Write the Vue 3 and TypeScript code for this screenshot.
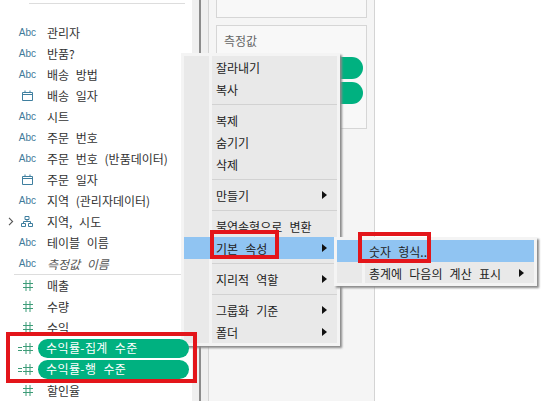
<script setup lang="ts">
type IconKind = "abc" | "date" | "geo" | "num" | "calc";

interface Field {
  icon: IconKind;
  label: string;
  italic?: boolean;
  pill?: boolean;
}

interface MenuEntry {
  label?: string;
  arrow?: boolean;
  active?: boolean;
  sep?: boolean;
}

const dimensions: Field[] = [
  { icon: "abc", label: "관리자" },
  { icon: "abc", label: "반품?" },
  { icon: "abc", label: "배송 방법" },
  { icon: "date", label: "배송 일자" },
  { icon: "abc", label: "시트" },
  { icon: "abc", label: "주문 번호" },
  { icon: "abc", label: "주문 번호 (반품데이터)" },
  { icon: "date", label: "주문 일자" },
  { icon: "abc", label: "지역 (관리자데이터)" },
  { icon: "geo", label: "지역, 시도" },
  { icon: "abc", label: "테이블 이름" },
  { icon: "abc", label: "측정값 이름", italic: true },
];

const measures: Field[] = [
  { icon: "num", label: "매출" },
  { icon: "num", label: "수량" },
  { icon: "num", label: "수익" },
  { icon: "calc", label: "수익률-집계 수준", pill: true },
  { icon: "calc", label: "수익률-행 수준", pill: true },
  { icon: "num", label: "할인율" },
];

const menu: MenuEntry[] = [
  { label: "잘라내기" },
  { label: "복사" },
  { sep: true },
  { label: "복제" },
  { label: "숨기기" },
  { label: "삭제" },
  { sep: true },
  { label: "만들기", arrow: true },
  { sep: true },
  { label: "불연속형으로 변환" },
  { label: "기본 속성", arrow: true, active: true },
  { sep: true },
  { label: "지리적 역할", arrow: true },
  { sep: true },
  { label: "그룹화 기준", arrow: true },
  { label: "폴더", arrow: true },
];

const submenu: MenuEntry[] = [
  { label: "숫자 형식...", active: true },
  { label: "총계에 다음의 계산 표시", arrow: true },
];
</script>

<template>
  <div class="page">
    <aside class="sidebar">
      <div class="top-rule"></div>
      <ul class="fields">
        <li v-for="f in dimensions" :key="f.label" class="field">
          <svg v-if="f.icon === 'geo'" class="chevron" width="6" height="9" viewBox="0 0 6 9">
            <path d="M1 .8 4.6 4.5 1 8.2" fill="none" stroke="#555" stroke-width="1.1" />
          </svg>
          <span class="icon">
            <span v-if="f.icon === 'abc'" class="abc">Abc</span>
            <svg v-else-if="f.icon === 'date'" width="11" height="11" viewBox="0 0 11 11">
              <path d="M.5 2.5h10v8H.5zM.5 4.5h10M3 .5v2M8 .5v2" fill="none" stroke="#3f7f9f" />
            </svg>
            <svg v-else width="12" height="11" viewBox="0 0 12 11">
              <path d="M4 .5h4v3H4zM.5 7.5h4v3h-4zM7.5 7.5h4v3h-4zM6 3.5v2M2.5 7.5v-2h7v2" fill="none" stroke="#3f7f9f" />
            </svg>
          </span>
          <span class="name" :class="{ italic: f.italic }">{{ f.label }}</span>
        </li>
      </ul>
      <div class="divider"></div>
      <ul class="fields">
        <li v-for="f in measures" :key="f.label" class="field" :class="{ 'pill-row': f.pill }">
          <span class="icon">
            <span v-if="f.icon === 'calc'" class="eq"></span>
            <svg width="10" height="11" viewBox="0 0 10 11">
              <path d="M3 0v11M7 0v11M0 3.5h10M0 7.5h10" fill="none" stroke="#3d9c78" />
            </svg>
          </span>
          <span class="name" :class="{ pill: f.pill }">{{ f.label }}</span>
        </li>
      </ul>
    </aside>

    <div class="splitter"></div>

    <section class="shelves">
      <div class="card card-top"></div>
      <div class="card card-values">
        <div class="card-title">측정값</div>
        <div class="shelf-pill"></div>
        <div class="shelf-pill"></div>
      </div>
    </section>

    <div class="canvas"></div>

    <div class="menu main-menu">
      <template v-for="(m, i) in menu" :key="i">
        <div v-if="m.sep" class="sep"></div>
        <div v-else class="item" :class="{ active: m.active }">
          <span>{{ m.label }}</span>
          <i v-if="m.arrow" class="arrow"></i>
        </div>
      </template>
    </div>

    <div class="menu sub-menu">
      <div v-for="m in submenu" :key="m.label" class="item" :class="{ active: m.active }">
        <span>{{ m.label }}</span>
        <i v-if="m.arrow" class="arrow"></i>
      </div>
    </div>

    <div class="mark mark-fields"></div>
    <div class="mark mark-basic"></div>
    <div class="mark mark-number"></div>
  </div>
</template>

<style scoped>
.page,
.page * {
  box-sizing: border-box;
}

.page {
  position: relative;
  display: flex;
  width: 544px;
  height: 401px;
  overflow: hidden;
  color: #333;
  font-family: "Noto Sans CJK KR", "Liberation Sans", sans-serif;
  font-size: 12px;
  background: #fff;
}

.sidebar {
  flex: 0 0 192px;
  padding-top: 3px;
  background: #fff;
}

.top-rule {
  height: 1px;
  margin: 0 7px 18px 29px;
  background: #ddd;
}

.fields {
  margin: 0;
  padding: 0;
  list-style: none;
}

.field {
  position: relative;
  display: flex;
  align-items: center;
  height: 21px;
  white-space: nowrap;
}

.chevron {
  position: absolute;
  top: 6px;
  left: 8px;
}

.icon {
  display: flex;
  flex: 0 0 33px;
  align-items: center;
  justify-content: flex-end;
  margin-right: 14px;
}

.abc {
  margin-right: -3px;
  color: #3f7a9a;
  font-family: "Liberation Sans", sans-serif;
  font-size: 10px;
}

.eq {
  width: 4px;
  height: 4px;
  margin-right: 1px;
  border-top: 1px solid #3d9c78;
  border-bottom: 1px solid #3d9c78;
}

.name {
  line-height: 21px;
  word-spacing: 4px;
}

.italic {
  color: #555;
  font-style: italic;
}

.divider {
  height: 1px;
  margin-left: 14px;
  background: #ddd;
}

.pill-row .icon {
  margin-right: 5px;
}

.pill {
  position: relative;
  z-index: 2;
  flex: 0 0 151px;
  height: 19px;
  padding-left: 8px;
  color: #fff;
  line-height: 18px;
  letter-spacing: 0.4px;
  background: #00b180;
  border-radius: 10px;
}

.splitter {
  flex: 0 0 17px;
  background-color: #f0f0f0;
  background-image: linear-gradient(#8c8c8c, #8c8c8c);
  background-repeat: no-repeat;
  background-position: 7px 0;
  background-size: 2px 100%;
  border-right: 1px solid #d4d4d4;
}

.shelves {
  display: flex;
  flex: 0 0 166px;
  flex-direction: column;
  gap: 7px;
  padding: 0 7px;
  background: #f5f5f5;
  border-right: 1px solid #d4d4d4;
}

.card {
  background: #f8f8f8;
  border: 1px solid #d6d6d6;
}

.card-top {
  height: 19px;
  margin-top: -1px;
}

.card-values {
  height: 104px;
  padding: 7px 3px 0 7px;
}

.card-title {
  height: 24px;
  color: #666;
  line-height: 16px;
}

.shelf-pill {
  height: 22px;
  margin-bottom: 3px;
  background: #00b180;
  border-radius: 11px;
}

.canvas {
  flex: 1;
  background: #fff;
}

.menu {
  position: absolute;
  z-index: 1;
  background-color: #e9e9e9;
  background-image: linear-gradient(#f4f4f4, #f4f4f4);
  background-repeat: no-repeat;
  background-position: 25px 0;
  background-size: 3px 100%;
  border: 3px solid #f4f4f4;
  box-shadow: 2px 2px 2px #8a8a8a;
}

.main-menu {
  top: 53px;
  left: 181px;
  width: 159px;
  height: 293px;
}

.sub-menu {
  top: 237px;
  left: 334px;
  width: 203px;
  height: 49px;
}

.item {
  display: flex;
  align-items: center;
  justify-content: space-between;
  height: 22px;
  padding: 0 10px 0 32px;
  color: #222;
  white-space: nowrap;
  word-spacing: 4.5px;
}

.item.active {
  background: #90c4f2;
}

.arrow {
  width: 0;
  height: 0;
  border-top: 4px solid transparent;
  border-bottom: 4px solid transparent;
  border-left: 5px solid #111;
}

.sep {
  height: 1px;
  margin: 4px 0 4px 28px;
  background: #d2d2d2;
}

.mark {
  position: absolute;
  z-index: 3;
  border: 4px solid #e3151a;
}

.mark-fields {
  top: 332px;
  left: 6px;
  width: 191px;
  height: 51px;
}

.mark-basic {
  top: 230px;
  left: 210px;
  width: 69px;
  height: 29px;
}

.mark-number {
  top: 232px;
  left: 358px;
  width: 73px;
  height: 31px;
}
</style>
